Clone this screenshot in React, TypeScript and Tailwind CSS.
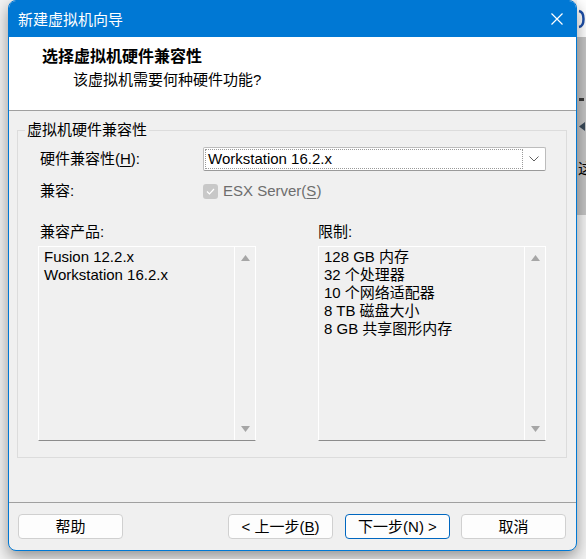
import type { ReactNode } from "react"

const font = "font-['Liberation_Sans','Noto_Sans_CJK_SC',sans-serif]"

const compatibleProducts = ["Fusion 12.2.x", "Workstation 16.2.x"]
const limits = ["128 GB 内存", "32 个处理器", "10 个网络适配器", "8 TB 磁盘大小", "8 GB 共享图形内存"]

function Arrow({ down }: { down?: boolean }) {
  return (
    <svg width="9" height="6" viewBox="0 0 9 6" className="block">
      <polygon points={down ? "0,0 9,0 4.5,6" : "0,6 9,6 4.5,0"} fill="#a6a6a6" />
    </svg>
  )
}

function ListBox({ items, width }: { items: string[]; width: string }) {
  return (
    <div
      className={`flex h-[195px] ${width} border border-white border-b-[#8c8c8c] bg-[#f0f0f0]`}
    >
      <div className="flex-1 pl-[5px] pt-[1px]">
        {items.map((item) => (
          <div key={item} className="text-[15px] leading-[18px] text-black">
            {item}
          </div>
        ))}
      </div>
      <div className="flex w-[21px] flex-col items-center justify-between border-l border-white pb-[8px] pt-[8px]">
        <Arrow />
        <Arrow down />
      </div>
    </div>
  )
}

function Button({ children, primary }: { children: ReactNode; primary?: boolean }) {
  return (
    <button
      className={`flex h-[25px] w-[105px] items-center justify-center rounded-[4px] border bg-[#fdfdfd] text-[15px] leading-none text-black ${
        primary ? "border-[#0067c0]" : "border-[#d0d0d0]"
      }`}
    >
      {children}
    </button>
  )
}

// bit of the app window behind the dialog, on the right edge
function BackgroundStrip() {
  return (
    <div className="flex w-[9px] flex-col">
      <div className="flex h-[37px] items-center bg-white pl-[1px]">
        <svg width="8" height="20" viewBox="0 0 8 20">
          <path d="M1 2 C7 3 7 17 1 18" stroke="#1f4fa8" strokeWidth="2.5" fill="none" />
        </svg>
      </div>
      <div className="flex h-[178px] flex-col bg-[#c4c4c4] pl-[2px]">
        <div className="mt-[61px] h-[3px] w-[5px] bg-[#3a3a3a]" />
        <svg width="6" height="9" viewBox="0 0 6 9" className="mt-[21px]">
          <polygon points="6,0 0,4.5 6,9" fill="#3a4a5a" />
        </svg>
        <span className="mt-[30px] -ml-[1px] text-[15px] leading-none text-black">这</span>
      </div>
    </div>
  )
}

export default function App() {
  return (
    <div className={`flex h-[559px] w-[586px] overflow-hidden bg-[#f3f3f3] pl-[8px] ${font}`}>
      <div className="relative z-10 flex h-[551px] w-[569px] flex-col overflow-hidden rounded-[8px] border border-[#0078d4] bg-[#f0f0f0] shadow-[0_6px_16px_rgba(0,0,0,0.4)]">
        <div className="flex h-[36px] shrink-0 items-center justify-between bg-[#0078d4] pl-[9px] pr-[13px]">
          <span className="text-[15px] leading-none text-white">新建虚拟机向导</span>
          <svg width="12" height="12" viewBox="0 0 12 12">
            <path d="M0.5 0.5 L11.5 11.5 M11.5 0.5 L0.5 11.5" stroke="white" strokeWidth="1.2" />
          </svg>
        </div>

        <div className="h-[74px] shrink-0 border-b border-[#a0a0a0] bg-white pl-[33px] pt-[10px]">
          <div className="text-[16px] font-bold leading-[20px] text-black">选择虚拟机硬件兼容性</div>
          <div className="mt-[3px] pl-[31px] text-[15px] leading-[20px] text-black">
            该虚拟机需要何种硬件功能?
          </div>
        </div>

        <div className="h-[391px] shrink-0 pt-[9px]">
          <fieldset className="ml-[8px] mr-[9px] border border-[#dcdcdc]">
            <legend className="ml-[7px] px-[2px] text-[15px] leading-[20px] text-black">
              虚拟机硬件兼容性
            </legend>
            <div className="pb-[16px] pl-[20px] pt-[7px]">
              <div className="flex h-[24px] items-center">
                <span className="ml-[2px] w-[163px] text-[15px] text-black">
                  硬件兼容性(<span className="underline underline-offset-2">H</span>):
                </span>
                <div className="flex h-[24px] w-[343px] items-center rounded-[2px] border border-[#bcbcbc] border-b-[#9a9a9a] bg-white p-[1px]">
                  <div className="flex h-full w-[318px] items-center border border-dotted border-[#9a9a9a] pl-[2px] text-[15px] text-black">
                    Workstation 16.2.x
                  </div>
                  <div className="flex flex-1 items-center justify-center">
                    <svg width="10" height="6" viewBox="0 0 10 6">
                      <path d="M0.5 0.5 L5 5 L9.5 0.5" stroke="#606060" fill="none" strokeWidth="1" />
                    </svg>
                  </div>
                </div>
              </div>

              <div className="mt-[8px] flex h-[24px] items-center">
                <span className="ml-[2px] w-[163px] text-[15px] text-black">兼容:</span>
                <span className="flex h-[15px] w-[15px] items-center justify-center rounded-[3px] bg-[#c8c8c8]">
                  <svg width="9" height="7" viewBox="0 0 9 7">
                    <path d="M1 3.5 L3.5 6 L8 1" stroke="white" fill="none" strokeWidth="1.2" />
                  </svg>
                </span>
                <span className="ml-[5px] text-[15px] text-[#6d6d6d]">
                  ESX Server(<span className="underline underline-offset-2">S</span>)
                </span>
              </div>

              <div className="mt-[19px] flex h-[20px] items-center text-[15px] text-black">
                <span className="ml-[2px] w-[278px]">兼容产品:</span>
                <span>限制:</span>
              </div>

              <div className="mt-[4px] flex gap-[62px]">
                <ListBox items={compatibleProducts} width="w-[218px]" />
                <ListBox items={limits} width="w-[228px]" />
              </div>
            </div>
          </fieldset>
        </div>

        <div className="flex flex-1 items-start border-t border-[#a0a0a0] pl-[9px] pt-[11px]">
          <Button>帮助</Button>
          <div className="ml-[105px] flex gap-[12px]">
            <Button>
              &lt; 上一步(<span className="underline underline-offset-2">B</span>)
            </Button>
            <Button primary>下一步(N) &gt;</Button>
          </div>
          <div className="ml-[11px]">
            <Button>取消</Button>
          </div>
        </div>
      </div>
      <BackgroundStrip />
    </div>
  )
}
